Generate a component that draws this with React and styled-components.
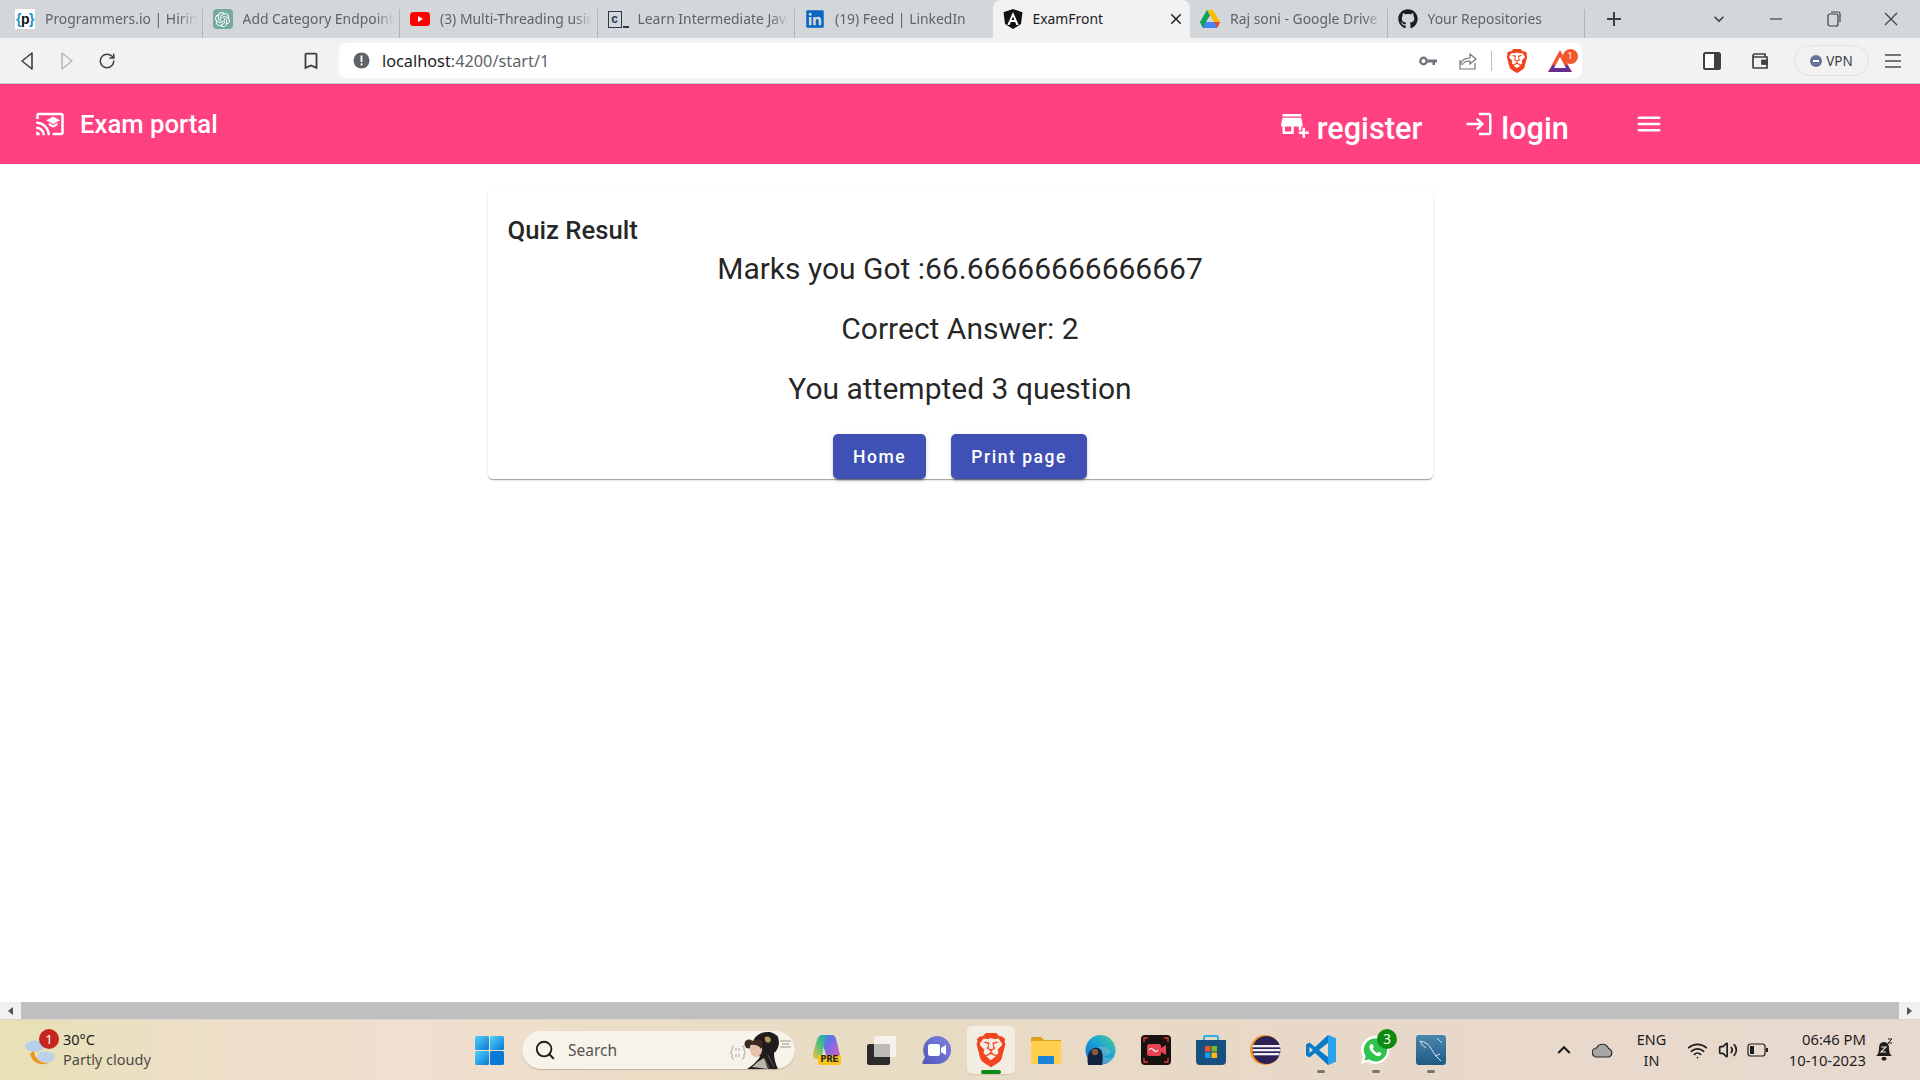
import React from 'react';
import styled, { createGlobalStyle } from 'styled-components';
import {
  MdCastForEducation, MdAddBusiness, MdLogin, MdMenu,
  MdOutlineBookmarkBorder, MdKeyboardArrowDown, MdKeyboardArrowUp, MdClose, MdAdd,
} from 'react-icons/md';
import { FaGithub, FaLinkedin } from 'react-icons/fa';
import { SiOpenai, SiBrave } from 'react-icons/si';
import { Search, RotateCw, Wifi, Volume2 } from 'lucide-react';

const GlobalStyle = createGlobalStyle`
  html, body { margin: 0; padding: 0; background: #fff; overflow: hidden; }
  * { box-sizing: border-box; }
  body { font-family: Roboto, "Noto Sans", sans-serif; }
`;

const Screen = styled.div`
  width: 1920px;
  height: 1080px;
  display: flex;
  flex-direction: column;
  overflow: hidden;
`;

/* ---------- browser chrome ---------- */

const TabStrip = styled.div`
  height: 38px;
  flex: none;
  display: flex;
  padding-left: 5px;
  background: #d3d7da;
  position: relative;
  z-index: 1;
`;

const Tab = styled.div`
  width: 197.5px;
  height: ${p => (p.$active ? '43px' : '38px')};
  padding: ${p => (p.$active ? '0 5px 5px 10px' : '0 6px 0 10px')};
  display: flex;
  align-items: center;
  gap: 10px;
  flex: none;
  background: ${p => (p.$active ? '#f2f2f2' : 'transparent')};
  border-radius: ${p => (p.$active ? '8px 8px 0 0' : '0')};
  position: relative;
  &::after {
    content: '';
    display: ${p => (p.$sep ? 'block' : 'none')};
    position: absolute;
    right: 0;
    top: 9px;
    height: 29px;
    width: 1px;
    background: #b3b6b9;
  }
`;

const TabIcon = styled.span`
  width: 20px;
  height: 20px;
  flex: none;
  display: flex;
  align-items: center;
  justify-content: center;
  color: ${p => p.$color || '#202124'};
  background: ${p => p.$bg || 'transparent'};
  border-radius: ${p => p.$round || 0}px;
`;

const TabTitle = styled.span`
  flex: 1;
  margin-top: -2px;
  overflow: hidden;
  white-space: nowrap;
  font-family: "Noto Sans", sans-serif;
  font-size: 13.9px;
  color: ${p => (p.$active ? '#202124' : '#5f6368')};
  -webkit-mask-image: ${p => (p.$active ? 'none' : 'linear-gradient(to right, #000 88%, transparent 100%)')};
  mask-image: ${p => (p.$active ? 'none' : 'linear-gradient(to right, #000 88%, transparent 100%)')};
`;

const PBadge = styled.span`
  font-family: "Liberation Sans", sans-serif;
  font-size: 14px;
  font-weight: 700;
  letter-spacing: -0.5px;
  color: #111;
  & i { font-style: normal; color: #1f8fc9; }
`;

const CodeBadge = styled.span`
  width: 14px;
  height: 17px;
  border: 1.5px solid #263a4d;
  font-family: "Liberation Sans", sans-serif;
  font-size: 12px;
  font-weight: 700;
  line-height: 14px;
  text-align: center;
  color: #263a4d;
  margin-right: 6px;
  position: relative;
  &::after {
    content: '';
    position: absolute;
    left: 14px;
    bottom: -1px;
    width: 6px;
    height: 1.5px;
    background: #263a4d;
  }
`;

const NewTab = styled.div`
  margin-left: 17px;
  width: 24px;
  display: flex;
  align-items: center;
  color: #3c4043;
`;

const WindowControls = styled.div`
  margin-left: auto;
  display: flex;
  align-items: center;
  color: #3c4043;
`;

const WinBtn = styled.div`
  width: 57.5px;
  display: flex;
  justify-content: center;
`;

const Toolbar = styled.div`
  height: 46px;
  flex: none;
  display: flex;
  align-items: flex-start;
  padding-top: 5px;
  background: #f2f2f2;
  border-bottom: 1px solid #d0d0d0;
`;

const NavBtn = styled.div`
  width: 40px;
  height: 35px;
  flex: none;
  display: flex;
  align-items: center;
  justify-content: center;
  color: ${p => (p.$off ? '#b9b9b9' : '#3c4043')};
`;

const NavGroup = styled.div`
  display: flex;
  padding-left: 7px;
  width: 291px;
`;

const Bookmark = styled(NavBtn)`
  margin-right: 8px;
`;

const AddressBar = styled.div`
  width: 1243px;
  height: 35px;
  flex: none;
  background: #fff;
  border-radius: 7px;
  display: flex;
  align-items: center;
  padding: 0 0.5px 0 14px;
`;

const UrlText = styled.span`
  margin-left: 12px;
  font-family: "Noto Sans", sans-serif;
  font-size: 16.3px;
  color: #202124;
  flex: 1;
  & em { font-style: normal; color: #5f6368; }
`;

const AddressIcon = styled.span`
  width: ${p => p.$w || 40}px;
  display: flex;
  justify-content: center;
  align-items: center;
  color: #70757a;
  position: relative;
`;

const Divider = styled.span`
  width: 1px;
  height: 20px;
  background: #b9bcbf;
  margin: 0 3.5px 0 3px;
`;

const BatCount = styled.span`
  position: absolute;
  top: -1px;
  right: 4px;
  width: 15px;
  height: 15px;
  border-radius: 50%;
  background: #f4552b;
  color: #fff;
  font-size: 9px;
  line-height: 15px;
  text-align: center;
`;

const ToolbarRight = styled.div`
  flex: 1;
  display: flex;
  align-items: center;
  height: 35px;
  padding-left: 106px;
`;

const SideIcon = styled.div`
  width: 48px;
  display: flex;
  justify-content: center;
  color: #3c4043;
`;

const VpnPill = styled.div`
  width: 75px;
  height: 31px;
  margin-left: 10px;
  border: 1px solid #e2e2e2;
  border-radius: 16px;
  display: flex;
  align-items: center;
  justify-content: center;
  gap: 4px;
  font-family: "Noto Sans", sans-serif;
  font-size: 13.5px;
  color: #3c4043;
`;

const VpnDot = styled.span`
  width: 12px;
  height: 12px;
  border-radius: 50%;
  background: #68709a;
  position: relative;
  &::after {
    content: '';
    position: absolute;
    left: 3px;
    top: 5px;
    width: 6px;
    height: 2px;
    background: #fff;
  }
`;

/* ---------- exam portal page ---------- */

const Page = styled.div`
  flex: 1;
  min-height: 0;
  background: #fff;
`;

const Navbar = styled.header`
  height: 80px;
  background: #ff4081;
  color: #fff;
  display: flex;
  align-items: center;
  padding: 0 0 0 35px;
`;

const Brand = styled.div`
  display: flex;
  align-items: center;
  gap: 15px;
  font-size: 25.7px;
  font-weight: 500;
`;

const NavLinks = styled.nav`
  margin-left: 1062px;
  display: flex;
  align-items: center;
`;

const NavLink = styled.a`
  display: flex;
  align-items: center;
  font-size: 30.7px;
  font-weight: 500;
  line-height: 40px;
  margin-top: 10px;
  margin-right: 42px;
  gap: 7px;
  & svg { margin-top: -10px; }
`;

const MenuIcon = styled.span`
  display: flex;
  margin-left: 23px;
  margin-top: -1px;
`;

const Card = styled.section`
  width: 945px;
  height: 290px;
  margin: 25px auto 0;
  padding: 21px 20px 0;
  background: #fff;
  border-radius: 5px;
  box-shadow: 0 2px 1px -1px rgba(0,0,0,.2), 0 1px 1px 0 rgba(0,0,0,.14), 0 1px 3px 0 rgba(0,0,0,.12);
`;

const CardTitle = styled.h2`
  margin: 0 0 -1px;
  font-size: 25.7px;
  font-weight: 500;
  line-height: 40px;
  color: rgba(0,0,0,.87);
`;

const ResultLine = styled.h1`
  margin: 0 0 20px;
  font-size: 30px;
  font-weight: 400;
  line-height: 40px;
  text-align: center;
  color: rgba(0,0,0,.87);
`;

const Actions = styled.div`
  display: flex;
  justify-content: center;
  gap: 25px;
  margin-top: 25px;
`;

const RaisedButton = styled.button`
  height: 45px;
  padding: 0 20px;
  border: 0;
  border-radius: 5px;
  background: #3f51b5;
  color: #fff;
  font-family: Roboto, sans-serif;
  font-size: 17.5px;
  font-weight: 500;
  letter-spacing: 1.55px;
  box-shadow: 0 3px 1px -2px rgba(0,0,0,.2), 0 2px 2px 0 rgba(0,0,0,.14), 0 1px 5px 0 rgba(0,0,0,.12);
`;

/* ---------- scrollbar ---------- */

const ScrollBar = styled.div`
  height: 18px;
  flex: none;
  display: flex;
  background: #f1f1f1;
  border-bottom: 1px solid #d8d4cc;
`;

const ScrollArrow = styled.div`
  width: 21px;
  display: flex;
  align-items: center;
  justify-content: center;
  &::before {
    content: '';
    border-style: solid;
    border-width: 4px 0 4px 5px;
    border-color: transparent transparent transparent #505050;
    transform: ${p => (p.$left ? 'rotate(180deg)' : 'none')};
  }
`;

const ScrollThumb = styled.div`
  flex: 1;
  background: #c0c0c0;
`;

/* ---------- windows taskbar ---------- */

const Taskbar = styled.footer`
  height: 60px;
  flex: none;
  display: flex;
  align-items: center;
  background: linear-gradient(90deg, #e7e1b4 0%, #ecdfc6 9%, #f1dfd0 21%, #ebddc6 33%, #e8dbc4 50%, #e8d8c8 68%, #e8d9cf 100%);
  position: relative;
`;

const Weather = styled.div`
  width: 462px;
  flex: none;
  display: flex;
  align-items: center;
  padding-left: 24px;
  gap: 5px;
  font-family: "Noto Sans", sans-serif;
`;

const WeatherIcon = styled.div`
  width: 34px;
  height: 40px;
  position: relative;
`;

const WeatherBadge = styled.span`
  position: absolute;
  top: -1px;
  right: -1px;
  width: 20px;
  height: 20px;
  border-radius: 50%;
  background: #c4261d;
  color: #fff;
  font-size: 13px;
  line-height: 20px;
  text-align: center;
`;

const WeatherText = styled.div`
  margin-top: -2px;
  font-size: 14.5px;
  line-height: 20px;
  color: #1c1c1c;
  & small { display: block; font-size: 14.5px; color: #4b4a45; }
`;

const AppSlot = styled.div`
  width: 48px;
  height: 48px;
  margin: 0 3.5px;
  flex: none;
  display: flex;
  align-items: center;
  justify-content: center;
  border-radius: 5px;
  position: relative;
  background: ${p => (p.$active ? 'rgba(255,255,255,.5)' : 'transparent')};
  box-shadow: ${p => (p.$active ? '0 1px 1px rgba(0,0,0,.1)' : 'none')};
  &::after {
    content: '';
    display: ${p => (p.$dot ? 'block' : 'none')};
    position: absolute;
    bottom: ${p => (p.$active ? 0 : 1)}px;
    left: 50%;
    width: ${p => (p.$active ? 20 : 8)}px;
    height: ${p => (p.$active ? 4 : 3)}px;
    margin-left: ${p => (p.$active ? -10 : -4)}px;
    border-radius: 2px;
    background: ${p => (p.$active ? '#0c8a12' : '#7a7570')};
  }
`;

const SearchBox = styled.div`
  width: 273px;
  height: 38px;
  flex: none;
  margin: 0 3px 0 5px;
  border-radius: 19px;
  background: #f7f2ea;
  box-shadow: 0 1px 1px rgba(80,60,40,.25);
  display: flex;
  align-items: center;
  padding-left: 12px;
  gap: 12px;
  font-family: "Noto Sans", sans-serif;
  font-size: 15.5px;
  color: #57544f;
  position: relative;
  overflow: hidden;
`;

const Doodle = styled.span`
  position: absolute;
  right: 3px;
  top: 0;
  display: flex;
`;

const PreTag = styled.span`
  position: absolute;
  right: 8.5px;
  bottom: 9px;
  width: 23px;
  border-radius: 2px;
  background: #f9c31a;
  color: #222;
  font-family: "Liberation Mono", monospace;
  font-size: 10px;
  line-height: 10px;
  font-weight: 700;
  text-align: center;
`;

const AppBadge = styled.span`
  position: absolute;
  top: 3px;
  right: 2.5px;
  width: 20px;
  height: 20px;
  border-radius: 50%;
  background: #0e8a0e;
  color: #fff;
  font-size: 13.5px;
  line-height: 20px;
  text-align: center;
  font-family: "Noto Sans", sans-serif;
`;

const Tray = styled.div`
  margin-left: auto;
  width: 374px;
  display: flex;
  align-items: center;
  color: #1d1d1d;
  font-family: "Noto Sans", sans-serif;
`;

const TrayIcon = styled.span`
  width: ${p => p.$w}px;
  flex: none;
  display: flex;
  justify-content: center;
`;

const Lang = styled.div`
  width: 55px;
  flex: none;
  margin-top: -1px;
  font-size: 14.4px;
  line-height: 21px;
  text-align: center;
`;

const Clock = styled.div`
  width: 91px;
  flex: none;
  margin-top: -1px;
  font-size: 14.8px;
  line-height: 21px;
  text-align: right;
  white-space: nowrap;
`;

/* ---------- drawn logos ---------- */

const ChevronTri = ({ dir, color }) => (
  <svg width="14" height="20" viewBox="0 0 14 20" fill="none" stroke={color} strokeWidth="1.6" strokeLinejoin="round">
    <path d={dir === 'left' ? 'M12 2 L2 10 L12 18 Z' : 'M2 2 L12 10 L2 18 Z'} />
  </svg>
);

const YouTubeLogo = () => (
  <svg width="20" height="14" viewBox="0 0 20 14">
    <rect width="20" height="14" rx="3.5" fill="#f00" />
    <path d="M8 4 L13 7 L8 10 Z" fill="#fff" />
  </svg>
);

const AngularLogo = () => (
  <svg width="20" height="20" viewBox="0 0 20 20">
    <path d="M10 0 L19.5 3.2 L18 15 L10 20 L2 15 L0.5 3.2 Z" fill="#111" />
    <path fillRule="evenodd" d="M10 3 L4.3 16 H6.6 L7.8 13 H12.2 L13.4 16 H15.7 Z M8.6 11 L10 7.5 L11.4 11 Z" fill="#fff" />
  </svg>
);

const DriveLogo = () => (
  <svg width="20" height="18" viewBox="0 0 20 18">
    <path d="M7 0 H13 L20 12 H14 Z" fill="#fbbc04" />
    <path d="M0 12 L3 18 H17 L20 12 Z" fill="#4285f4" />
    <path d="M14 12 H20 L17 18 Z" fill="#ea4335" />
    <path d="M0 12 L7 0 L10 5.5 L6 12 L3 18 Z" fill="#0fa15a" />
  </svg>
);

const BatLogo = () => (
  <svg width="24" height="22" viewBox="0 0 24 22">
    <path d="M12 0 L24 22 H0 Z" fill="#f4552b" />
    <path d="M0 22 L5 15 H19 L24 22 Z" fill="#662d91" />
    <path d="M12 7 L18 18 H6 Z" fill="#fff" />
  </svg>
);

const BraveLion = ({ size }) => (
  <SiBrave size={size} color="#f1441f" />
);

const SideLogo = () => (
  <svg width="18" height="18" viewBox="0 0 18 18">
    <rect x="1" y="1" width="16" height="16" rx="1.5" fill="#fff" stroke="#3c4043" strokeWidth="2" />
    <rect x="11" y="1" width="6" height="16" fill="#3c4043" />
  </svg>
);

const WalletLogo = () => (
  <svg width="18" height="18" viewBox="0 0 18 18" fill="none" stroke="#3c4043" strokeWidth="1.7">
    <path d="M2 4 Q2 2 4 2 H14 V5 M2 4 V15 Q2 16 3 16 H16 V5 H3 Q2 5 2 4" />
    <rect x="11" y="8.5" width="5" height="3.5" fill="#3c4043" />
  </svg>
);

const ThinMenu = () => (
  <svg width="18" height="16" viewBox="0 0 18 16">
    <path d="M1 2 H17 M1 8 H17 M1 14 H17" stroke="#4a4d50" strokeWidth="1.6" />
  </svg>
);

const WindowsLogo = () => (
  <svg width="29" height="29" viewBox="0 0 29 29">
    <defs>
      <linearGradient id="winA" x1="0" y1="0" x2="1" y2="1">
        <stop offset="0" stopColor="#52d1f9" />
        <stop offset="1" stopColor="#0a78d6" />
      </linearGradient>
    </defs>
    <rect width="14" height="14" rx="1.5" fill="url(#winA)" />
    <rect x="15" width="14" height="14" rx="1.5" fill="url(#winA)" />
    <rect y="15" width="14" height="14" rx="1.5" fill="url(#winA)" />
    <rect x="15" y="15" width="14" height="14" rx="1.5" fill="#0a78d6" />
  </svg>
);

const WeatherArt = () => (
  <svg width="34" height="40" viewBox="0 0 34 40">
    <path d="M6 24 A13 13 0 0 0 26 32 A12 12 0 0 1 10 20 Z" fill="#f0951c" />
    <ellipse cx="11" cy="16" rx="10" ry="5.5" fill="#b7cfe8" />
    <ellipse cx="22" cy="27" rx="9" ry="5.5" fill="#bcd2ea" />
  </svg>
);

// search box doodle: a small portrait with bits of formula either side
const AdaDoodle = () => (
  <svg width="64" height="38" viewBox="0 0 64 38">
    <path d="M6 15 Q3 15 4 19 Q4 21 2 21.5 Q4 22 4 24 Q3 28 6 28 M14 15 Q17 15 16 19 Q16 21 18 21.5 Q16 22 16 24 Q17 28 14 28 M8 17 V20 M11 17 V20 M8 23 V26 M11 23 V26" fill="none" stroke="#a9a6a0" strokeWidth="1" />
    <path d="M52 10 h11 M52 16 h11 M54 13 h7" stroke="#8f8c86" strokeWidth="0.9" />
    <path d="M26 8 Q32 0 42 1 Q51 3 51 11 Q51 18 46 22 Q46 30 50 38 H19 Q27 33 32 26 Q26 18 26 8 Z" fill="#1f1c1b" />
    <circle cx="21" cy="13" r="4.5" fill="#3a2a22" />
    <ellipse cx="28" cy="18" rx="6.2" ry="8.2" fill="#e6c2ac" />
    <path d="M22 14 Q24 7 33 9 Q36 13 33 18 Q30 13 22 14 Z" fill="#3a2a22" />
    <path d="M37 6 q5 -2 6 3 q-1 4 -5 2 q-2 -2 -1 -5" fill="#b9985a" />
    <path d="M24 36 Q30 30 36 27 L40 38 Z" fill="#efe9df" opacity="0.75" />
    <path d="M36 27 L42 38 M40 24 L46 36" stroke="#6f6b66" strokeWidth="0.8" />
  </svg>
);

const CopilotLogo = () => (
  <svg width="30" height="30" viewBox="0 0 30 30" style={{ marginTop: -5 }}>
    <defs>
      <linearGradient id="copA" x1="0" y1="0" x2="1" y2="1">
        <stop offset="0" stopColor="#1f8fe0" />
        <stop offset="0.5" stopColor="#7d6be3" />
        <stop offset="1" stopColor="#e25fb2" />
      </linearGradient>
      <linearGradient id="copB" x1="0" y1="1" x2="1" y2="0">
        <stop offset="0" stopColor="#f5c33b" />
        <stop offset="0.5" stopColor="#4fc27a" />
        <stop offset="1" stopColor="#1f8fe0" />
      </linearGradient>
    </defs>
    <path d="M9 2 H21 Q24 2 25 6 L29 22 Q29 25 26 25 H16 Z" fill="url(#copA)" />
    <path d="M11 2 H19 Q15 3 14 8 L11 22 Q10 27 5 26 Q1 25 2 20 L6 7 Q7 3 11 2 Z" fill="url(#copB)" />
  </svg>
);

const TaskViewLogo = () => (
  <svg width="30" height="34" viewBox="0 0 30 34">
    <rect x="1" y="11" width="23" height="21" rx="2" fill="#2b2b2b" />
    <rect x="8" y="3" width="23" height="21" rx="2" fill="#f7f6f3" opacity="0.85" />
    <rect x="8" y="11" width="16" height="13" rx="1" fill="#bdbbb7" />
  </svg>
);

const MeetLogo = () => (
  <svg width="30" height="30" viewBox="0 0 30 30">
    <defs>
      <linearGradient id="meetA" x1="0" y1="1" x2="1" y2="0">
        <stop offset="0" stopColor="#5056b8" />
        <stop offset="1" stopColor="#7f84e0" />
      </linearGradient>
    </defs>
    <path d="M16 1 A14 14 0 0 1 16 29 H3 Q0 29 2 26 L4 22 A14 14 0 0 1 16 1 Z" fill="url(#meetA)" />
    <rect x="7" y="9" width="12" height="12" rx="2.5" fill="#fff" />
    <path d="M20 13 L25 10 V20 L20 17 Z" fill="#fff" />
  </svg>
);

const FolderLogo = () => (
  <svg width="30" height="28" viewBox="0 0 30 28">
    <path d="M0 3 Q0 1 2 1 H10 L13 4 H30 V10 H0 Z" fill="#dba018" />
    <rect y="5" width="30" height="23" rx="1.5" fill="#ffcf4d" />
    <rect x="7" y="20" width="16" height="8" rx="1" fill="#1a85d6" />
  </svg>
);

const EdgeLogo = () => (
  <svg width="31" height="30" viewBox="0 0 31 30">
    <defs>
      <linearGradient id="edgeA" x1="0" y1="1" x2="1" y2="0">
        <stop offset="0" stopColor="#1465c0" />
        <stop offset="0.55" stopColor="#1aa3d8" />
        <stop offset="1" stopColor="#4fd38a" />
      </linearGradient>
    </defs>
    <circle cx="15.5" cy="15" r="15" fill="url(#edgeA)" />
    <path d="M11 13 Q22 9 26 17 Q24 21 18 21 Q22 24 28 23 Q24 30 15 30 V13 Z" fill="#ead9c4" opacity="0.25" />
    <path d="M3 30 Q1 20 6 15 Q11 10 16 15 Q19 20 17 30 Z" fill="#10233f" />
    <circle cx="10" cy="17" r="3.2" fill="#8a5a44" />
  </svg>
);

const RecorderLogo = () => (
  <svg width="30" height="30" viewBox="0 0 30 30">
    <rect width="30" height="30" rx="4" fill="#17120f" />
    <path d="M3 7 V3 H7 M23 3 H27 V7 M3 23 V27 H7 M23 27 H27 V23" stroke="#e83a3a" strokeWidth="1.3" fill="none" />
    <rect x="6" y="9" width="14" height="12" rx="2.5" fill="#e64454" />
    <path d="M20 13 L25 10 V20 L20 17 Z" fill="#e64454" />
    <path d="M8 15 Q10 12 12.5 15 T17 15 Q15 18 12.5 15 T8 15" fill="none" stroke="#fff" strokeWidth="1.2" />
  </svg>
);

const StoreLogo = () => (
  <svg width="30" height="30" viewBox="0 0 30 30">
    <path d="M8 6 V2 Q8 1 9 1 H21 Q22 1 22 2 V6" fill="none" stroke="#2bb2e6" strokeWidth="2" />
    <path d="M0 5 H30 V26 Q30 30 26 30 H4 Q0 30 0 26 Z" fill="#17507f" />
    <rect x="9" y="11" width="5.5" height="5.5" fill="#e9542c" />
    <rect x="15.5" y="11" width="5.5" height="5.5" fill="#7cb928" />
    <rect x="9" y="17.5" width="5.5" height="5.5" fill="#1a9be8" />
    <rect x="15.5" y="17.5" width="5.5" height="5.5" fill="#f9b912" />
  </svg>
);

const EclipseLogo = () => (
  <svg width="31" height="30" viewBox="0 0 31 30">
    <circle cx="15" cy="15" r="15" fill="#f7941e" />
    <circle cx="16.5" cy="15" r="14" fill="#2c2255" />
    <rect x="2.5" y="10" width="28" height="2.3" fill="#efedf5" />
    <rect x="2.5" y="14" width="28" height="2.3" fill="#efedf5" />
    <rect x="3.5" y="18" width="26" height="2.3" fill="#efedf5" />
  </svg>
);

const VsCodeLogo = () => (
  <svg width="30" height="30" viewBox="0 0 30 30">
    <path d="M22 0 L30 3.5 V26.5 L22 30 L9 18 L3.5 22.5 L0 20.5 V9.5 L3.5 7.5 L9 12 Z" fill="#0a7cc7" />
    <path d="M22 0 L30 3.5 V26.5 L22 30 Z" fill="#2aa3ee" />
    <path d="M22 8 V22 L13 15 Z" fill="#e8dcd0" />
    <path d="M3.5 12 V18 L7 15 Z" fill="#e8dcd0" />
  </svg>
);

const WhatsappLogo = () => (
  <svg width="31" height="30" viewBox="0 0 31 30">
    <path d="M15.5 1 A14 14 0 1 1 8 27 L1 29 L3 22 A14 14 0 0 1 15.5 1 Z" fill="#fff" />
    <path d="M15.5 3.5 A11.5 11.5 0 1 1 8.8 24.3 L4.5 25.5 L5.7 21.3 A11.5 11.5 0 0 1 15.5 3.5 Z" fill="#2ec24f" />
    <path d="M11 9 Q9 10 9.5 13 Q11 18 16 20.5 Q19 22 21 20 Q22 18.5 21 18 L18.5 16.8 L17 18 Q14 16.5 12.8 13.5 L13.8 12 L12.8 9.5 Q12 8.6 11 9 Z" fill="#fff" />
  </svg>
);

const MysqlLogo = () => (
  <svg width="30" height="30" viewBox="0 0 30 30">
    <defs>
      <linearGradient id="sqlA" x1="0" y1="0" x2="0" y2="1">
        <stop offset="0" stopColor="#4a87ad" />
        <stop offset="1" stopColor="#1f5a86" />
      </linearGradient>
    </defs>
    <rect width="30" height="30" rx="3" fill="url(#sqlA)" />
    <path d="M4 6 Q12 7 16 15 Q19 21 25 26 M4 6 Q6 11 10 13 M21 3 L26 8 M19 21 L24 19" fill="none" stroke="#d4e3ee" strokeWidth="1" />
  </svg>
);

const OneDriveCloud = () => (
  <svg width="22" height="16" viewBox="0 0 22 16">
    <path d="M5 15 A4.5 4.5 0 0 1 4.5 6 A6.5 6.5 0 0 1 16.5 6.5 A4.5 4.5 0 0 1 17 15 Z" fill="#a8a6a3" stroke="#2a2a2a" strokeWidth="1.2" />
  </svg>
);

const Battery = () => (
  <svg width="22" height="14" viewBox="0 0 22 14" fill="none" stroke="#1d1d1d" strokeWidth="1.2">
    <rect x="1" y="1" width="17" height="12" rx="2.5" />
    <rect x="3" y="3" width="4" height="8" fill="#1d1d1d" stroke="none" />
    <path d="M20 5 V9" strokeWidth="2" />
  </svg>
);

const SnoozeBell = () => (
  <svg width="18" height="24" viewBox="0 0 18 24">
    <path d="M1 18 Q4 16 4 10 Q4 4 9 4 Q14 4 14 10 Q14 16 17 18 Z" fill="#1d1d1d" />
    <rect x="6.5" y="19" width="5" height="3.5" rx="1.7" fill="#1d1d1d" />
    <path d="M6 9 h5 l-5 5 h5" stroke="#f2e2d6" strokeWidth="1.1" fill="none" />
    <path d="M13 1 h4 l-4 4 h4" stroke="#1d1d1d" strokeWidth="1" fill="none" />
  </svg>
);

const tabs = [
  { title: 'Programmers.io | Hiring', icon: <PBadge><i>{'{'}</i>p<i>{'}'}</i></PBadge>, bg: '#fff', sep: true },
  { title: 'Add Category Endpoint', icon: <SiOpenai size={15} />, bg: '#74aa9c', color: '#fff', round: 4, sep: true },
  { title: '(3) Multi-Threading using', icon: <YouTubeLogo />, sep: true },
  { title: 'Learn Intermediate Java', icon: <CodeBadge>c</CodeBadge>, sep: true },
  { title: '(19) Feed | LinkedIn', icon: <FaLinkedin size={20} />, color: '#0a66c2' },
  { title: 'ExamFront', icon: <AngularLogo />, active: true },
  { title: 'Raj soni - Google Drive', icon: <DriveLogo />, sep: true },
  { title: 'Your Repositories', icon: <FaGithub size={20} />, sep: true, color: '#1b1f23' },
];

const apps = [
  { key: 'copilot', node: <CopilotLogo />, extra: <PreTag>PRE</PreTag> },
  { key: 'tasks', node: <TaskViewLogo /> },
  { key: 'meet', node: <MeetLogo /> },
  { key: 'brave', node: <BraveLion size={34} />, active: true, dot: true },
  { key: 'files', node: <FolderLogo /> },
  { key: 'edge', node: <EdgeLogo /> },
  { key: 'recorder', node: <RecorderLogo /> },
  { key: 'store', node: <StoreLogo /> },
  { key: 'eclipse', node: <EclipseLogo /> },
  { key: 'vscode', node: <VsCodeLogo />, dot: true },
  { key: 'whatsapp', node: <WhatsappLogo />, dot: true, extra: <AppBadge>3</AppBadge> },
  { key: 'mysql', node: <MysqlLogo />, dot: true },
];

export default function App() {
  return (
    <Screen>
      <GlobalStyle />
      <TabStrip>
        {tabs.map(t => (
          <Tab key={t.title} $active={t.active} $sep={t.sep}>
            <TabIcon $bg={t.bg} $color={t.color} $round={t.round}>{t.icon}</TabIcon>
            <TabTitle $active={t.active}>{t.title}</TabTitle>
            {t.active && <MdClose size={18} color="#202124" />}
          </Tab>
        ))}
        <NewTab><MdAdd size={24} /></NewTab>
        <WindowControls>
          <WinBtn><MdKeyboardArrowDown size={20} /></WinBtn>
          <WinBtn>
            <svg width="14" height="14" viewBox="0 0 14 14"><path d="M1 7 H13" stroke="#3c4043" strokeWidth="1.2" /></svg>
          </WinBtn>
          <WinBtn>
            <svg width="14" height="16" viewBox="0 0 14 16" fill="none" stroke="#3c4043" strokeWidth="1.2">
              <rect x="1" y="3" width="10" height="12" rx="2" />
              <path d="M4 1 H11 Q13 1 13 3 V11" />
            </svg>
          </WinBtn>
          <WinBtn>
            <svg width="16" height="16" viewBox="0 0 16 16"><path d="M2 2 L14 14 M14 2 L2 14" stroke="#3c4043" strokeWidth="1.2" /></svg>
          </WinBtn>
        </WindowControls>
      </TabStrip>

      <Toolbar>
        <NavGroup>
          <NavBtn><ChevronTri dir="left" color="#3c4043" /></NavBtn>
          <NavBtn $off><ChevronTri dir="right" color="#b9b9b9" /></NavBtn>
          <NavBtn><RotateCw size={18} /></NavBtn>
        </NavGroup>
        <Bookmark><MdOutlineBookmarkBorder size={22} /></Bookmark>
        <AddressBar>
          <svg width="17" height="17" viewBox="0 0 17 17">
            <circle cx="8.5" cy="8.5" r="8" fill="#5f6368" />
            <rect x="7.6" y="3.5" width="1.8" height="6.5" fill="#fff" />
            <rect x="7.6" y="11.3" width="1.8" height="2" fill="#fff" />
          </svg>
          <UrlText>localhost<em>:4200/start/1</em></UrlText>
          <AddressIcon>
            <svg width="18" height="10" viewBox="0 0 18 10">
              <circle cx="4.5" cy="5" r="3.2" fill="none" stroke="#70757a" strokeWidth="2.4" />
              <path d="M8 3.5 H18 V6.5 H16 V9 H13.5 V6.5 H8 Z" fill="#70757a" />
            </svg>
          </AddressIcon>
          <AddressIcon>
            <svg width="18" height="19" viewBox="0 0 18 19" fill="none" stroke="#70757a" strokeWidth="1.2">
              <path d="M1 9 V18 H16 V12 M1 14 Q3 7 11 7 V3 L17 8 L11 13 V10 Q5 10 3 14" />
            </svg>
          </AddressIcon>
          <Divider />
          <AddressIcon $w={42}><BraveLion size={24} /></AddressIcon>
          <AddressIcon $w={44}><BatLogo /><BatCount>1</BatCount></AddressIcon>
        </AddressBar>
        <ToolbarRight>
          <SideIcon><SideLogo /></SideIcon>
          <SideIcon><WalletLogo /></SideIcon>
          <VpnPill><VpnDot />VPN</VpnPill>
          <SideIcon><ThinMenu /></SideIcon>
        </ToolbarRight>
      </Toolbar>

      <Page>
        <Navbar>
          <Brand><MdCastForEducation size={30} />Exam portal</Brand>
          <NavLinks>
            <NavLink><MdAddBusiness size={30} />register</NavLink>
            <NavLink><MdLogin size={30} />login</NavLink>
            <MenuIcon><MdMenu size={30} /></MenuIcon>
          </NavLinks>
        </Navbar>
        <Card>
          <CardTitle>Quiz Result</CardTitle>
          <ResultLine>Marks you Got :66.66666666666667</ResultLine>
          <ResultLine>Correct Answer: 2</ResultLine>
          <ResultLine>You attempted 3 question</ResultLine>
          <Actions>
            <RaisedButton>Home</RaisedButton>
            <RaisedButton>Print page</RaisedButton>
          </Actions>
        </Card>
      </Page>

      <ScrollBar>
        <ScrollArrow $left />
        <ScrollThumb />
        <ScrollArrow />
      </ScrollBar>

      <Taskbar>
        <Weather>
          <WeatherIcon><WeatherArt /><WeatherBadge>1</WeatherBadge></WeatherIcon>
          <WeatherText>30°C<small>Partly cloudy</small></WeatherText>
        </Weather>
        <AppSlot><WindowsLogo /></AppSlot>
        <SearchBox>
          <Search size={22} color="#1c1c1c" />
          Search
          <Doodle><AdaDoodle /></Doodle>
        </SearchBox>
        {apps.map(a => (
          <AppSlot key={a.key} $active={a.active} $dot={a.dot}>
            {a.node}
            {a.extra}
          </AppSlot>
        ))}
        <Tray>
          <TrayIcon $w={36}><MdKeyboardArrowUp size={26} /></TrayIcon>
          <TrayIcon $w={42}><OneDriveCloud /></TrayIcon>
          <Lang>ENG<br />IN</Lang>
          <TrayIcon $w={36}><Wifi size={21} /></TrayIcon>
          <TrayIcon $w={26}><Volume2 size={20} /></TrayIcon>
          <TrayIcon $w={34}><Battery /></TrayIcon>
          <Clock>06:46 PM<br />10-10-2023</Clock>
          <TrayIcon $w={36}><SnoozeBell /></TrayIcon>
        </Tray>
      </Taskbar>
    </Screen>
  );
}
